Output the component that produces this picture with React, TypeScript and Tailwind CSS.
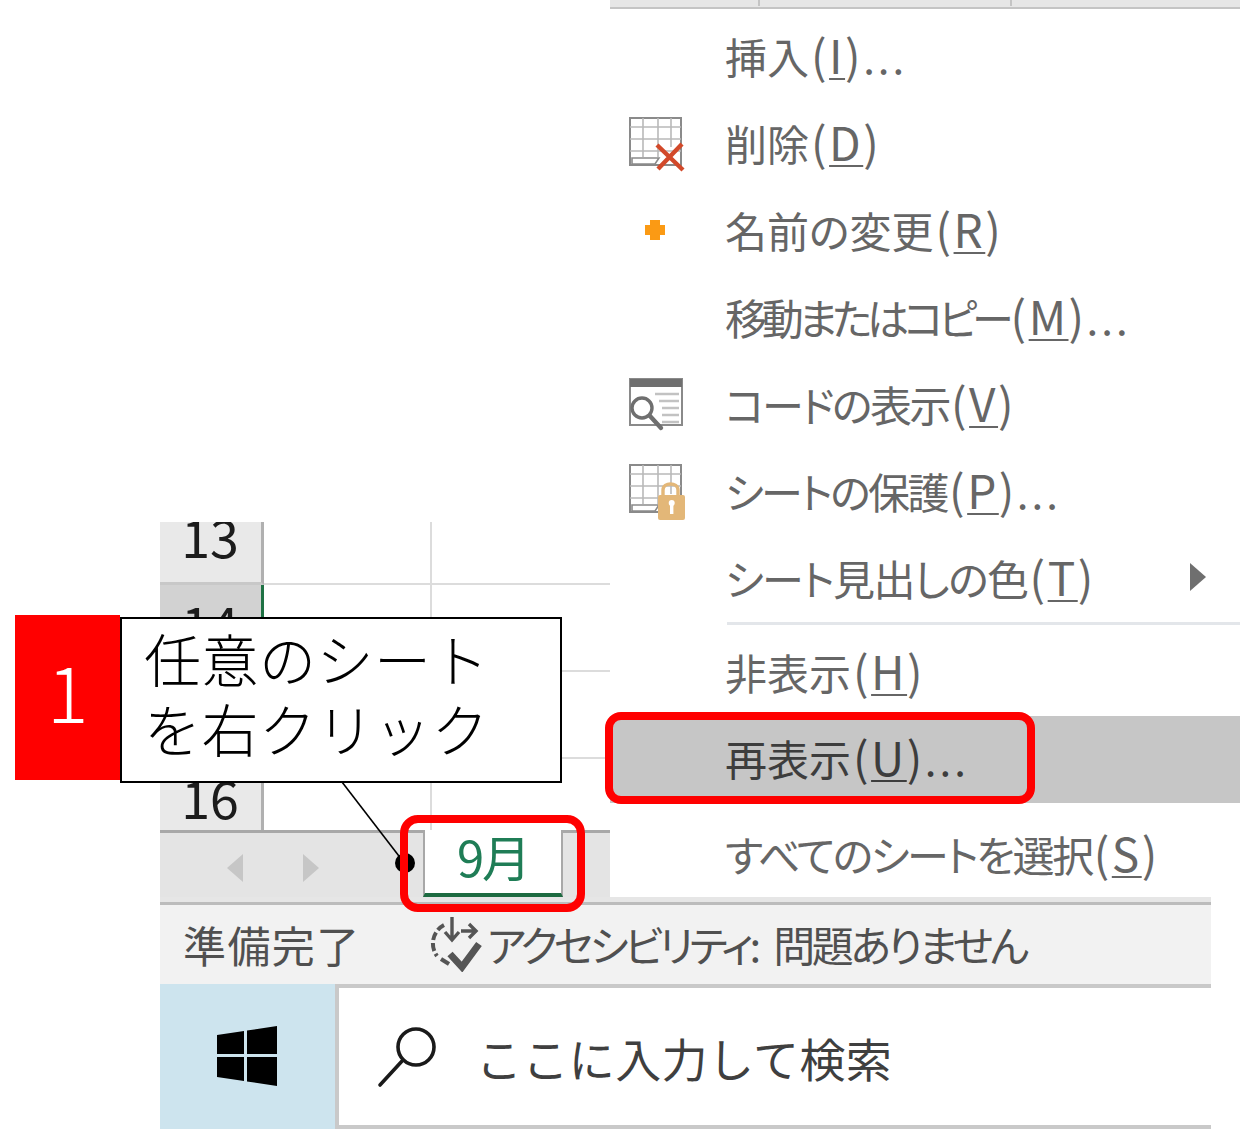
const FONT = "font-['Noto_Sans_CJK_JP','Noto_Sans',sans-serif]";

function GridIcon() {
  return (
    <>
      <rect x="1" y="1" width="51" height="47" fill="#fff" stroke="#8a8a8a" strokeWidth="2" />
      <path d="M1 10H52M1 22H52M1 34H52M14 1V40M29 1V40M42 1V30" stroke="#b9b9b9" strokeWidth="1.6" fill="none" />
      <path d="M3 47H26L30 41H3Z" fill="#fff" stroke="#8a8a8a" strokeWidth="1.6" />
    </>
  );
}

function DeleteIcon() {
  return (
    <svg width="58" height="56" viewBox="0 0 58 56" className="block">
      <GridIcon />
      <path d="M28 28L54 53M53 27L29 52" stroke="#d2492a" strokeWidth="4.4" fill="none" />
    </svg>
  );
}

function RenameIcon() {
  return (
    <svg width="22" height="22" viewBox="0 0 22 22" className="ml-[15px] mb-[4px] block">
      <path d="M6 1H16V6H21V16H16V21H6V16H1V6H6Z" fill="#fb9a14" />
    </svg>
  );
}

function CodeIcon() {
  return (
    <svg width="58" height="56" viewBox="0 0 58 56" className="block">
      <rect x="1" y="1" width="52" height="46" fill="#fff" stroke="#8a8a8a" strokeWidth="2" />
      <rect x="1" y="1" width="52" height="8" fill="#6f6f6f" />
      <path d="M26 16H50M30 23H50M33 30H50M33 37H50M33 44H50" stroke="#c2c2c2" strokeWidth="2.4" fill="none" />
      <circle cx="13" cy="30" r="10" fill="#fff" stroke="#6f6f6f" strokeWidth="3.4" />
      <path d="M21 38L32 50" stroke="#6f6f6f" strokeWidth="4.4" strokeLinecap="round" />
    </svg>
  );
}

function ProtectIcon() {
  return (
    <svg width="58" height="58" viewBox="0 0 58 58" className="block">
      <GridIcon />
      <path d="M34 32V26C34 18 49 18 49 26V32" fill="none" stroke="#e3b778" strokeWidth="3.4" />
      <rect x="29" y="31" width="27" height="25" rx="2" fill="#e3b778" />
      <rect x="41" y="38" width="3.4" height="12" fill="#fff" />
      <circle cx="42.7" cy="39" r="3" fill="#fff" />
    </svg>
  );
}

function AccessibilityIcon() {
  return (
    <svg width="54" height="56" viewBox="0 0 54 56" className="block">
      <path d="M15 9A21 21 0 0 0 8 40" fill="none" stroke="#555" strokeWidth="4" strokeDasharray="8 3" />
      <path d="M12 43L20 48" stroke="#555" strokeWidth="4" />
      <path d="M23 1V23M16 16L23 24L30 16" fill="none" stroke="#555" strokeWidth="3.4" />
      <path d="M32 15H46M40 8L47 15L40 22" fill="none" stroke="#555" strokeWidth="3.4" />
      <path d="M21 38L33 51L50 28" fill="none" stroke="#555" strokeWidth="7" />
    </svg>
  );
}

function WindowsLogo() {
  return (
    <svg width="60" height="60" viewBox="0 0 60 60" className="block">
      <path d="M0 9L27 5V28H0ZM30 4.5L60 0V28H30ZM0 31H27V55L0 51ZM30 31H60V60L30 55.5Z" fill="#000" />
    </svg>
  );
}

function SearchGlyph() {
  return (
    <svg width="62" height="62" viewBox="0 0 62 62" className="block">
      <circle cx="39" cy="21" r="18" fill="none" stroke="#1a1a1a" strokeWidth="3.6" />
      <path d="M26 34L3 59" stroke="#1a1a1a" strokeWidth="3.6" strokeLinecap="round" />
    </svg>
  );
}

type MenuRow = {
  label: string;
  accel: string;
  dots?: boolean;
  track?: string;
  icon?: React.ReactNode;
  arrow?: boolean;
  height: string;
};

const GROUP_A: MenuRow[] = [
  { label: "挿入", accel: "I", dots: true, height: "h-[87px]" },
  { label: "削除", accel: "D", icon: <DeleteIcon />, height: "h-[87px]" },
  { label: "名前の変更", accel: "R", icon: <RenameIcon />, height: "h-[87px]" },
  { label: "移動またはコピー", accel: "M", dots: true, track: "tracking-[-5.2px]", height: "h-[87px]" },
  { label: "コードの表示", accel: "V", track: "tracking-[-2.5px]", icon: <CodeIcon />, height: "h-[87px]" },
  { label: "シートの保護", accel: "P", dots: true, track: "tracking-[-2.5px]", icon: <ProtectIcon />, height: "h-[87px]" },
  { label: "シート見出しの色", accel: "T", track: "tracking-[-1.5px]", arrow: true, height: "h-[86px]" },
];

function Row({ row, active }: { row: MenuRow; active?: boolean }) {
  return (
    <div className={`flex items-center ${row.height} ${active ? "bg-[#c6c6c6] text-[#3d3d3d]" : "text-[#666666]"}`}>
      <div className="flex w-[115px] shrink-0 justify-start pl-[19px]">{row.icon}</div>
      <span className="mb-[7px] flex-1 whitespace-nowrap text-[42px] leading-none [font-feature-settings:'palt']">
        <span className={row.track}>{row.label}</span>
        <span className="ml-[2px] text-[46px] leading-none tracking-[2.5px]">
          (<span className="underline decoration-2 underline-offset-4">{row.accel}</span>)
        </span>
        {row.dots && <span className="tracking-[3px]">...</span>}
      </span>
      {row.arrow && (
        <svg width="16" height="28" viewBox="0 0 16 28" className="mr-[34px] mb-[4px] block">
          <path d="M0 0L16 14L0 28Z" fill="#6f6f6f" />
        </svg>
      )}
    </div>
  );
}

function ContextMenu() {
  return (
    <div className="flex h-[897px] flex-1 flex-col">
      <div className="flex h-[9px] border-b-2 border-[#c4c4c4] bg-[#e6e6e6] pb-[1px]">
        <div className="w-[150px] border-r-2 border-[#c4c4c4]" />
        <div className="w-[252px] border-r-2 border-[#c4c4c4]" />
      </div>
      <div className="h-[5px]" />
      {GROUP_A.map((row) => (
        <Row key={row.label} row={row} />
      ))}
      <div className="ml-[117px] h-[3px] bg-[#e3e6ea]" />
      <div className="h-[6px]" />
      <Row row={{ label: "非表示", accel: "H", height: "h-[85px]" }} />
      <Row active row={{ label: "再表示", accel: "U", dots: true, height: "h-[87px]" }} />
      <div className="h-[10px]" />
      <Row row={{ label: "すべてのシートを選択", accel: "S", track: "tracking-[-2.4px]", height: "h-[84px]" }} />
    </div>
  );
}

const SHEET_ROWS = [
  { n: "13", active: false, height: "h-[87px]" },
  { n: "14", active: true, height: "h-[87px]" },
  { n: "15", active: false, height: "h-[87px]" },
  { n: "16", active: false, height: "h-[87px]" },
];

function Sheet() {
  return (
    <div className="flex w-[450px] shrink-0 flex-col pt-[522px]">
      <div className="h-[308px] overflow-hidden">
        <div className="-mt-[24px]">
          {SHEET_ROWS.map((r) => (
            <div key={r.n} className={`flex ${r.height}`}>
              <div
                className={`flex w-[104px] shrink-0 items-center justify-center border-r-[3px] border-b-[3px] pr-[1px] pb-[9px] text-[52px] leading-none text-[#1c1c1c] ${
                  r.active ? "border-r-[#1f7244] border-b-[#c8c8c8] bg-[#d2d2d2]" : "border-r-[#b0b0b0] border-b-[#c8c8c8] bg-[#e9e9e9]"
                }`}
              >
                {r.n}
              </div>
              <div className="w-[168px] shrink-0 border-r-2 border-b-2 border-[#dcdcdc]" />
              <div className="flex-1 border-b-2 border-[#dcdcdc]" />
            </div>
          ))}
        </div>
      </div>
      <div className="flex h-[67px] items-stretch border-t-[3px] border-[#a8a8a8] bg-[#e4e4e4]">
        <div className="flex w-[263px] items-center pl-[67px] pt-[5px]">
          <svg width="16" height="28" viewBox="0 0 16 28" className="block">
            <path d="M16 0L0 14L16 28Z" fill="#c6c6c6" />
          </svg>
          <svg width="16" height="28" viewBox="0 0 16 28" className="ml-[60px] block">
            <path d="M0 0L16 14L0 28Z" fill="#c6c6c6" />
          </svg>
        </div>
        <div className="-mt-[3px] flex w-[140px] items-center justify-center border-x-2 border-b-[4px] border-x-[#a8a8a8] border-b-[#1d6b41] bg-white pb-[12px] text-[49px] leading-none tracking-[-2px] text-[#1f7d56]">
          9月
        </div>
      </div>
    </div>
  );
}

function StatusBar() {
  return (
    <div className="ml-[160px] w-[1051px]">
      <div className="h-[8px] border-b-[3px] border-[#bcbcbc] bg-[#e6e6e6]" />
      <div className="flex h-[79px] items-center bg-[#f2f2f2] pb-[1px] pl-[23px] text-[42px] leading-none text-[#505050]">
        <span className="w-[246px] whitespace-nowrap text-[43px] tracking-[1.4px]">準備完了</span>
        <AccessibilityIcon />
        <span className="ml-[4px] whitespace-nowrap tracking-[-4px] [font-feature-settings:'palt']">アクセシビリティ:</span>
        <span className="ml-[16px] whitespace-nowrap tracking-[-3.5px] [font-feature-settings:'palt']">問題ありません</span>
      </div>
    </div>
  );
}

function Taskbar() {
  return (
    <div className="ml-[160px] flex h-[145px] w-[1051px]">
      <div className="flex w-[175px] shrink-0 items-center justify-center bg-[#cde4ee] pr-[2px] pb-[1px]">
        <WindowsLogo />
      </div>
      <div className="flex flex-1 items-center border-t-4 border-b-4 border-l-4 border-[#c9c9c9] bg-white pl-[38px] text-[46px] leading-none text-[#3f3f3f]">
        <SearchGlyph />
        <span className="ml-[37px] whitespace-nowrap tracking-[0.4px]">ここに入力して検索</span>
      </div>
    </div>
  );
}

export default function App() {
  return (
    <div className={`relative h-[1129px] w-[1240px] overflow-hidden bg-white ${FONT}`}>
      <div className="ml-[160px] flex">
        <Sheet />
        <ContextMenu />
      </div>
      <StatusBar />
      <Taskbar />

      {/* callout leader */}
      <svg width="120" height="120" viewBox="0 0 120 120" className="absolute left-[320px] top-[770px]">
        <path d="M22 12L82 90" stroke="#000" strokeWidth="1.6" />
        <circle cx="85" cy="93" r="10" fill="#000" />
      </svg>

      {/* step badge + callout */}
      <div className="absolute left-[15px] top-[615px] flex h-[165px] w-[105px] items-center justify-center bg-[#ff0000] pb-[18px] text-[78px] font-light leading-none text-white">
        1
      </div>
      <div className="absolute left-[120px] top-[617px] h-[166px] w-[442px] border-2 border-black bg-white pl-[22px] pt-[3px] text-[57px] font-light leading-[70px] tracking-[0.5px] text-black">
        任意のシート
        <br />
        を右クリック
      </div>

      {/* red highlights */}
      <div className="absolute left-[400px] top-[815px] h-[97px] w-[185px] rounded-[18px] border-[8px] border-[#ff0000]" />
      <div className="absolute left-[605px] top-[712px] h-[92px] w-[430px] rounded-[16px] border-[8px] border-[#ff0000]" />
    </div>
  );
}
